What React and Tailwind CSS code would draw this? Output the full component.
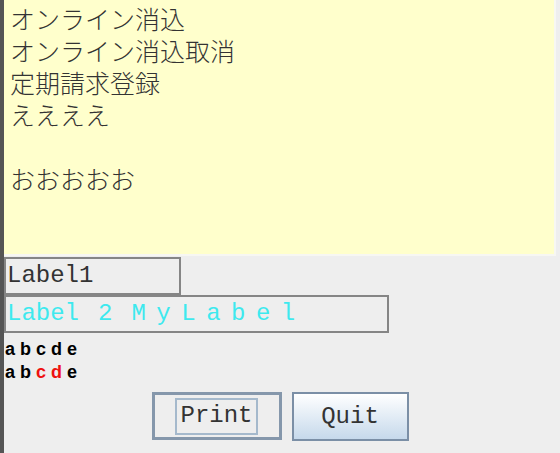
export default function App() {
  const mono = { fontFamily: '"Liberation Mono", "Courier New", monospace' };
  return (
    <div className="w-[560px] h-[453px] bg-[#eeeeee] flex overflow-hidden">
      <div className="w-[4px] bg-[#555555]" />
      <div className="w-[552px] flex flex-col">
        <div
          className="h-[256px] bg-[#ffffcc] border-r-2 border-b-2 border-[#f7f7f2] pl-[6px] pt-[2px] text-[25px] leading-[32px] font-light text-[#333333]"
          style={{ fontFamily: '"Noto Sans CJK JP", sans-serif' }}
        >
          <div>オンライン消込</div>
          <div>オンライン消込取消</div>
          <div>定期請求登録</div>
          <div>ええええ</div>
          <div>&nbsp;</div>
          <div>おおおおお</div>
        </div>

        <div
          className="mt-[1px] w-[177px] h-[38px] border-2 border-[#858585] flex items-center pl-[1px] text-[24px] leading-none text-[#333333]"
          style={mono}
        >
          Label1
        </div>
        <div
          className="w-[385px] h-[38px] border-2 border-[#858585] flex items-center pl-[1px] text-[24px] leading-none text-[#3ee9ee] whitespace-pre"
          style={mono}
        >
          <span>Label</span>
          <span className="ml-[19px]">2</span>
          <span className="ml-[19px] tracking-[10.5px]">MyLabel</span>
        </div>

        <div
          className="mt-[5px] pl-[1px] text-[18px] font-bold leading-[23px] text-black"
          style={{ fontFamily: '"Liberation Sans", Arial, sans-serif' }}
        >
          <div>a b c d e</div>
          <div>
            a b <span className="text-[#ee1111]">c</span> <span className="text-[#ee1111]">d</span> e
          </div>
        </div>

        <div className="mt-[8px] flex justify-center gap-[10px]" style={mono}>
          <button className="w-[130px] h-[48px] border-[3px] border-[#8597ab] bg-[#eeeeee] flex items-center justify-center text-[24px] leading-none text-[#333333]">
            <span className="h-[37px] px-[3px] border-2 border-[#a5b9cc] flex items-center">Print</span>
          </button>
          <button className="w-[117px] h-[49px] border-2 border-[#7b8fa6] bg-gradient-to-b from-white to-[#c6d9eb] flex items-center justify-center text-[24px] leading-none text-[#333333]">
            Quit
          </button>
        </div>
      </div>
    </div>
  );
}
